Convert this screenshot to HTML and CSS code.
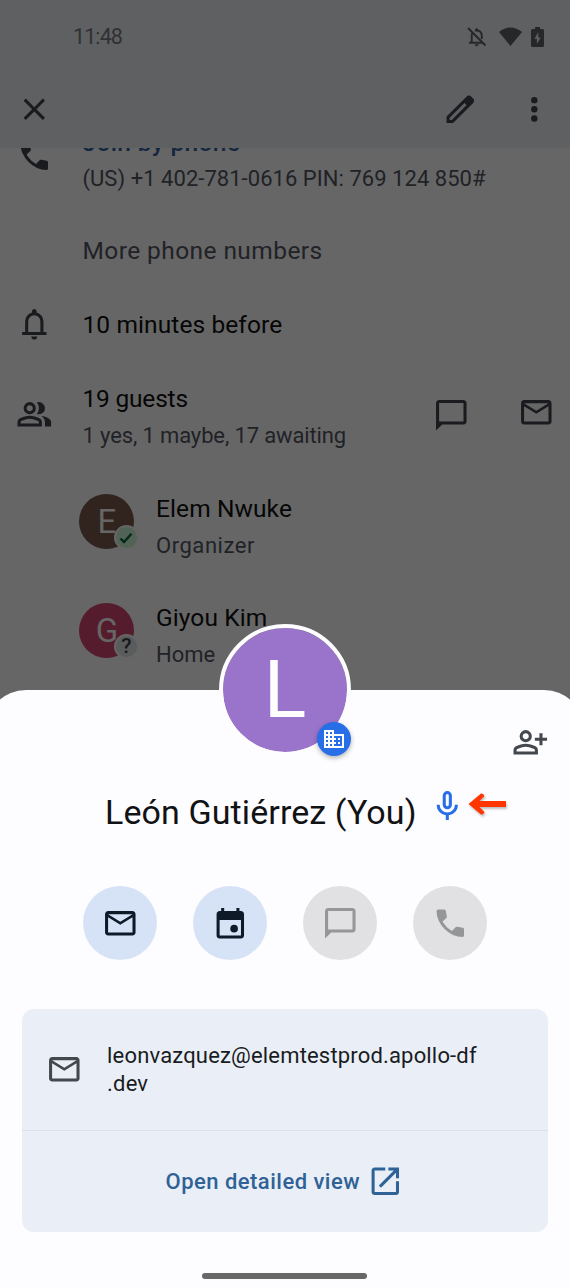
FILE: index.html
```html
<!DOCTYPE html>
<html lang="en">
<head>
<meta charset="utf-8">
<title>Event guests</title>
<link rel="stylesheet" href="styles.css">
</head>
<body>
<svg class="defs" width="0" height="0">
  <symbol id="mail" viewBox="0 0 24 24"><path d="M4 20q-.825 0-1.412-.587T2 18V6q0-.825.588-1.412T4 4h16q.825 0 1.413.588T22 6v12q0 .825-.587 1.413T20 20zm8-7L4 8v10h16V8zm0-2l8-5H4z"/></symbol>
  <symbol id="chat" viewBox="0 0 24 24"><path fill-rule="evenodd" d="M20 2H4c-1.1 0-2 .9-2 2v18l4-4h14c1.1 0 2-.9 2-2V4c0-1.1-.9-2-2-2zM4 4h16v12H4z"/></symbol>
  <symbol id="call" viewBox="0 0 24 24"><path d="M19.95 21q-3.125 0-6.175-1.362t-5.55-3.863-3.862-5.55T3 4.05q0-.45.3-.75t.75-.3H8.1q.35 0 .625.238t.325.562l.65 3.5q.05.4-.025.675T9.4 8.45L6.975 10.9q.5.925 1.187 1.787t1.513 1.663q.775.775 1.625 1.438T13.1 17l2.35-2.35q.225-.225.588-.337t.712-.063l3.45.7q.35.1.575.363T21 15.9v4.05q0 .45-.3.75t-.75.3"/></symbol>
</svg>
<div class="screen">
  <header class="top">
    <div class="status">
      <span class="clock">11:48</span>
      <span class="status-icons">
        <svg class="bell-off" viewBox="0 0 20 20"><g fill="none" stroke="currentColor" stroke-width="1.9"><path d="M1 1l17.5 17.5M2 15.7h14M4.700 15.500V8.800q0-1.500.700-2.700M8 3.600Q14.800 2.600 14.800 9v3"/></g><path d="M8.500 3.500V2q1.200-1.800 2.400 0v1.500zM7.700 17.300h4q-.3 2-2 2t-2-2z"/></svg>
        <svg class="wifi" viewBox="0 0 23 19"><path d="M0 5Q11.500-4 23 5L11.500 19z"/></svg>
        <svg class="battery" viewBox="0 0 13 20"><path fill-rule="evenodd" d="M4 0h5v2h2.500Q13 2 13 3.500v15q0 1.500-1.500 1.500h-10Q0 20 0 18.500v-15Q0 2 1.500 2H4zM7.300 5L3.500 11.800h2.400V17l3.700-6.600H7.300z"/></svg>
      </span>
    </div>
    <div class="toolbar">
      <svg class="icon" viewBox="0 0 24 24"><path d="M19 6.410L17.590 5 12 10.590 6.410 5 5 6.410 10.590 12 5 17.590 6.410 19 12 13.410 17.590 19 19 17.590 13.410 12z"/></svg>
      <span class="spacer"></span>
      <svg class="icon" viewBox="0 0 24 24"><path d="M5 19h1.425L16.200 9.225 14.775 7.800 5 17.575zM3 21v-4.250L16.200 3.575q.3-.275.663-.425t.762-.15.775.15.65.45L20.425 5q.3.275.438.65T21 6.400q0 .4-.137.763t-.438.662L7.250 21z"/><path d="M17.600 3.800L20 6.400 17 9.600 14.400 7z"/></svg>
      <svg class="icon more" viewBox="0 0 24 24"><circle cx="12" cy="6" r="2.100"/><circle cx="12" cy="12" r="2.100"/><circle cx="12" cy="18" r="2.100"/></svg>
    </div>
  </header>

  <main class="scroll">
    <div class="rows">
      <div class="row phone">
        <svg class="icon"><use href="#call"/></svg>
        <div class="text"><div class="main link">Join by phone</div><div class="sub pin">(US) +1 402-781-0616 PIN: 769 124 850#</div></div>
      </div>
      <div class="row"><span class="icon"></span><div class="text"><div class="main muted">More phone numbers</div></div></div>
      <div class="row">
        <svg class="icon" viewBox="0 0 24 24"><path d="M4 19v-2h2v-7q0-2.075 1.250-3.687T10.500 4.200v-.7q0-.625.438-1.062T12 2t1.063.438T13.500 3.500v.7q2 .5 3.250 2.113T18 10v7h2v2zm8 3q-.825 0-1.412-.587T10 20h4q0 .825-.587 1.413T12 22m-4-5h8v-7q0-1.650-1.175-2.825T12 6 9.175 7.175 8 10z"/></svg>
        <div class="text"><div class="main">10 minutes before</div></div>
      </div>
      <div class="row guests">
        <svg class="icon people" viewBox="0 0 24 24"><path d="M1 20v-2.800q0-.85.438-1.562T2.600 14.550q1.550-.775 3.150-1.162T9 13t3.250.388 3.150 1.162q.725.375 1.163 1.088T17 17.200V20zm18 0v-3q0-1.100-.612-2.113T16.650 13.150q1.275.15 2.400.513t2.100.887q.9.5 1.375 1.112T23 17v3zM9 12q-1.650 0-2.825-1.175T5 8t1.175-2.825T9 4t2.825 1.175T13 8t-1.175 2.825T9 12m10-4q0 1.650-1.175 2.825T15 12q-.275 0-.7-.062t-.7-.138q.675-.8 1.038-1.775T15 8t-.362-2.025T13.600 4.200q.35-.125.7-.163T15 4q1.650 0 2.825 1.175T19 8M3 18h12v-.8q0-.275-.137-.5t-.363-.35q-1.350-.675-2.725-1.012T9 15t-2.775.338T3.500 16.350q-.225.125-.362.350T3 17.200zm6-8q.825 0 1.413-.587T11 8t-.587-1.412T9 6t-1.412.588T7 8t.588 1.413T9 10"/></svg>
        <div class="text"><div class="main count">19 guests</div><div class="sub awaiting">1 yes, 1 maybe, 17 awaiting</div></div>
        <svg class="icon chat-action"><use href="#chat"/></svg>
        <svg class="icon"><use href="#mail"/></svg>
      </div>
      <div class="row person">
        <div class="avatar brown">E<span class="badge yes"><svg viewBox="0 0 14 12"><path d="M1.500 6.500L5 10 12.500 1.800" fill="none" stroke="currentColor" stroke-width="2.400"/></svg></span></div>
        <div class="text"><div class="main">Elem Nwuke</div><div class="sub role">Organizer</div></div>
      </div>
      <div class="row person">
        <div class="avatar pink">G<span class="badge maybe">?</span></div>
        <div class="text"><div class="main">Giyou Kim</div><div class="sub">Home</div></div>
      </div>
    </div>
  </main>

  <section class="sheet">
    <div class="profile">L
      <span class="domain"><svg viewBox="0 0 24 24"><path d="M12 7V3H2v18h20V7H12zM6 19H4v-2h2v2zm0-4H4v-2h2v2zm0-4H4V9h2v2zm0-4H4V5h2v2zm4 12H8v-2h2v2zm0-4H8v-2h2v2zm0-4H8V9h2v2zm0-4H8V5h2v2zm10 12h-8v-2h2v-2h-2v-2h2v-2h-2V9h8v10zm-2-8h-2v2h2v-2zm0 4h-2v2h2v-2z"/></svg></span>
    </div>
    <div class="sheet-top">
      <svg class="icon" viewBox="0 0 24 24"><path d="M18 14v-3h-3V9h3V6h2v3h3v2h-3v3zm-9-2q-1.650 0-2.825-1.175T5 8t1.175-2.825T9 4t2.825 1.175T13 8t-1.175 2.825T9 12m-8 8v-2.800q0-.85.438-1.562T2.600 14.550q1.550-.775 3.150-1.162T9 13t3.250.388 3.150 1.162q.725.375 1.163 1.088T17 17.200V20zm2-2h12v-.8q0-.275-.137-.5t-.363-.35q-1.350-.675-2.725-1.012T9 15t-2.775.338T3.500 16.350q-.225.125-.362.350T3 17.200zm6-8q.825 0 1.413-.587T11 8t-.587-1.412T9 6t-1.412.588T7 8t.588 1.413T9 10"/></svg>
    </div>
    <div class="name-row">
      <h1 class="name">León Gutiérrez (You)</h1>
      <svg class="icon mic" viewBox="0 0 24 24"><path d="M12 14q-1.250 0-2.125-.875T9 11V5q0-1.250.875-2.125T12 2t2.125.875T15 5v6q0 1.250-.875 2.125T12 14m-1 7v-3.075q-2.600-.35-4.300-2.325T5 11h2q0 2.075 1.463 3.538T12 16t3.538-1.463T17 11h2q0 2.625-1.700 4.600T13 17.925V21zm1-9q.425 0 .713-.288T13 11V5q0-.425-.287-.712T12 4t-.712.288T11 5v6q0 .425.288.713T12 12"/></svg>
      <svg class="arrow" viewBox="0 0 42 26"><path d="M1.500 13L14 2.500q2.500-.5 3.500 2.500L12.500 10H39v6H12.500l5 5q-1 3-3.500 2.500z"/></svg>
    </div>
    <div class="actions">
      <span class="action"><svg class="icon"><use href="#mail"/></svg></span>
      <span class="action"><svg class="icon" viewBox="0 0 24 24"><path fill-rule="evenodd" d="M19 4h-1V2h-2v2H8V2H6v2H5c-1.100 0-2 .9-2 2v14c0 1.100.9 2 2 2h14c1.100 0 2-.9 2-2V6c0-1.100-.9-2-2-2zM5 20V9.800h14V20z"/><circle cx="14.500" cy="15.500" r="2.500"/></svg></span>
      <span class="action off"><svg class="icon"><use href="#chat"/></svg></span>
      <span class="action off"><svg class="icon"><use href="#call"/></svg></span>
    </div>
    <div class="card">
      <div class="email-row">
        <svg class="icon"><use href="#mail"/></svg>
        <div class="email"><span class="line">leonvazquez@elemtestprod.apollo-df</span><br>.dev</div>
      </div>
      <div class="detail"><span>Open detailed view</span>
        <svg class="icon" viewBox="0 0 24 24"><path d="M19 19H5V5h7V3H5c-1.100 0-2 .9-2 2v14c0 1.100.9 2 2 2h14c1.100 0 2-.9 2-2v-7h-2v7zM14 3v2h3.590l-9.830 9.830 1.410 1.410L19 6.410V10h2V3h-7z"/></svg>
      </div>
    </div>
    <div class="home-bar"></div>
  </section>
</div>
</body>
</html>
```
FILE: styles.css
```css
* { box-sizing: border-box; }
body { margin: 0; font-family: Roboto, "Liberation Sans", sans-serif; background: #666; }
.defs { display: block; position: absolute; }
.screen { width: 570px; height: 1288px; overflow: hidden; display: flex; flex-direction: column; background: #666; }
.icon { width: 36.6px; height: 36.6px; flex: none; fill: currentColor; display: block; }
.spacer { flex: 1; }

.top { height: 148px; flex: none; background: #5f6062; color: #1a1b1e; }
.status { height: 73px; padding: 0 26.500px 0 73px; display: flex; align-items: center; justify-content: space-between; color: #2b2c2e; }
.clock { font-size: 21.500px; letter-spacing: -.9px; color: #303133; }
.status-icons { display: flex; align-items: center; color: #262729; }
.status-icons svg { fill: currentColor; display: block; }
.bell-off { width: 20px; height: 20px; margin-right: 12px; }
.wifi { width: 23px; height: 19px; margin-right: 9px; }
.battery { width: 13px; height: 20px; }
.toolbar { height: 72px; padding: 0 17.500px 0 15.700px; display: flex; align-items: center; }
.more { margin-left: 37px; }

.scroll { height: 542px; flex: none; overflow: hidden; color: #1a1b1e; }
.rows { margin-top: -24.500px; }
.row { height: 74px; padding: 0 15.500px 0 15.700px; display: flex; align-items: center; }
.text { margin-left: 30.200px; flex: 1; white-space: nowrap; }
.main { font-size: 24.500px; line-height: 37px; letter-spacing: .1px; color: #060606; }
.sub { font-size: 22px; line-height: 37px; color: #212226; }
.main.muted { color: #212226; letter-spacing: .42px; }
.main.link { color: #142741; font-weight: 500; letter-spacing: .35px; }
.main.count { letter-spacing: -.2px; }
.pin { letter-spacing: .04px; margin-top: -1px; }
.awaiting { letter-spacing: -.13px; }
.role { letter-spacing: .55px; }
.phone { height: 90px; align-items: flex-start; }
.phone .icon { margin-top: 14px; }
.guests { height: 108px; padding-top: 3px; }
.guests .people { margin-top: -6px; }
.chat-action { margin-right: 48.500px; }
.guests .chat-action { margin-top: -3px; }
.guests .chat-action + .icon { margin-top: -9px; }

.person { height: 109px; padding: 5px 0 0 79.400px; }
.person .text { margin-left: 21.600px; }
.avatar { position: relative; width: 55px; height: 55px; margin-top: -10px; border-radius: 50%; font-size: 33px; line-height: 56px; text-align: center; color: #666; }
.brown { background: #31241f; }
.pink { background: #551c2d; }
.badge { position: absolute; left: 34.500px; top: 31px; width: 25px; height: 25px; border-radius: 50%; border: 2px solid #666; display: flex; align-items: center; justify-content: center; }
.yes { background: #506354; color: #06281a; }
.yes svg { width: 14px; height: 12px; }
.maybe { background: #5a5b5c; color: #18191b; font-size: 21px; line-height: 1; font-weight: 500; }

.sheet { position: relative; height: 598px; flex: none; margin: 0 -14px; padding: 0 14px; border-radius: 40px 40px 0 0; background: #fdfcff; color: #43474e; }
.profile { position: absolute; left: 233px; top: -66px; width: 132px; height: 132px; border: 4.500px solid #fdfcff; border-radius: 50%; background: #9a74cb; background-clip: padding-box; color: #fdfcff; font-size: 79px; line-height: 125px; text-align: center; }
.domain { position: absolute; right: -4px; bottom: -4px; width: 34px; height: 34px; border-radius: 50%; background: #276ee7; box-shadow: 0 2px 5px rgba(0,0,0,.3); display: flex; align-items: center; justify-content: center; }
.domain svg { width: 24px; height: 24px; fill: #fdfcff; }
.sheet-top { height: 91px; padding: 34px 21.500px 0; display: flex; justify-content: flex-end; }
.name-row { height: 62px; padding-left: 105px; display: flex; align-items: center; }
.name { margin: 0; width: 324px; font-weight: 400; font-size: 34px; line-height: 42px; letter-spacing: .1px; white-space: nowrap; color: #111214; }
.mic { color: #276ee7; margin-top: -12px; }
.arrow { width: 42px; height: 26px; margin: -16px 0 0 1px; fill: #ff3502; filter: drop-shadow(1px 2px 1px rgba(0,0,0,.25)); }
.actions { height: 166px; padding: 43px 83px 0; display: flex; justify-content: space-between; align-items: flex-start; }
.action { width: 74px; height: 74px; border-radius: 50%; background: #d6e3f7; color: #0f1a29; display: flex; align-items: center; justify-content: center; }
.off { background: #e1e1e3; color: #959698; }
.card { width: 526px; height: 223px; margin: 0 22px; border-radius: 12px; background: #eaeef6; }
.email-row { height: 122px; padding-left: 24px; display: flex; align-items: center; border-bottom: 1.500px solid #dbe0ea; }
.email { margin-left: 24.500px; font-size: 22px; line-height: 27.500px; letter-spacing: .17px; color: #191c1e; white-space: nowrap; }
.detail { height: 101px; padding-left: 143.500px; display: flex; align-items: center; color: #2f6297; font-size: 22px; font-weight: 500; letter-spacing: .48px; }
.detail span { width: 201.500px; white-space: nowrap; }
.home-bar { width: 165px; height: 6px; margin: 41px 0 0 202px; border-radius: 3px; background: #686868; }
```
